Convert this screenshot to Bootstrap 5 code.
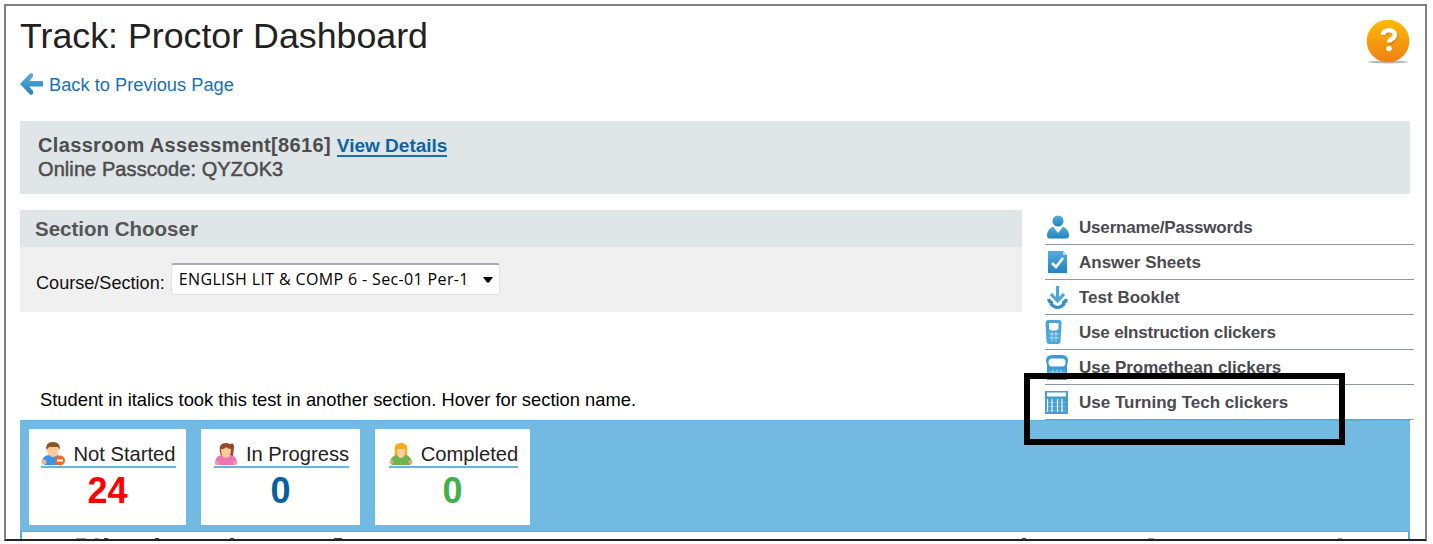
<!DOCTYPE html>
<html lang="en">
<head>
<meta charset="utf-8">
<meta name="viewport" content="width=device-width, initial-scale=1">
<title>Track: Proctor Dashboard</title>
<link href="https://cdn.jsdelivr.net/npm/bootstrap@5.3.0/dist/css/bootstrap.min.css" rel="stylesheet">
<style>
  body { font-family: "Liberation Sans", Arial, sans-serif; color: #1c1c1c; background: #fff; line-height: 1; overflow: hidden; }
  .frame { margin: 4px 0 0 4px; width: 1423px; height: 537px; border: 2px solid #808080; border-bottom-color: #222; padding: 0 13px 0 14px; }
  .frame, .frame * { white-space: nowrap; }
  .top-area { height: 115px; padding-top: 12px; }
  .page-title { font-size: 35.75px; font-weight: 400; line-height: 36px; margin: 0; color: #222; }
  .back-link { font-size: 18.3px; color: #1a70b5; text-decoration: none; margin-top: 19px; height: 24px; }
  .back-link svg { margin: -3px 5px 0 0; }
  .help { margin: 2px 2px 0 0; }
  .info-bar { height: 73px; width: 1390px; background: #e0e5e8; padding: 12px 18px; color: #4d4d4d; line-height: 24px; }
  .info-title { font-size: 20px; letter-spacing: .35px; }
  .info-title a { font-size: 19px; letter-spacing: 0; color: #0b64a5; text-decoration: none; border-bottom: 2px solid #1a6fae; display: inline-block; line-height: 19px; }
  .info-pass { font-size: 20px; letter-spacing: .08px; -webkit-text-stroke: .5px #4d4d4d; }
  .main-row { margin-top: 16px; height: 210px; }
  .left-col { width: 1002px; }
  .chooser { height: 102px; background: #f0f0f0; }
  .chooser-head { height: 37px; background: #e0e5e8; color: #555; font-size: 20.5px; line-height: 37px; padding-left: 15px; }
  .chooser-body { padding: 16px 0 0 16px; color: #111; font-size: 18.1px; }
  .chooser-body label { padding-top: 11px; }
  .picker { width: 329px; height: 32px; border: 1px solid #dde3ea; border-top: 2px solid #a9adb3; border-radius: 3px; background: #fff; color: #000; margin-left: 6px; padding: 0 5px 0 7px; font: 500 16px/29px "Open Sans", sans-serif; letter-spacing: .36px; }
  .note { margin: 78px 0 0 20px; font-size: 18.33px; line-height: 20px; color: #000; }
  .tools { width: 369px; margin-left: 23px; position: relative; z-index: 1; }
  .tool { height: 35px; border-bottom: 1.5px solid #8c99a3; color: #4a4a4f; font-size: 17px; font-weight: 700; }
  .tool svg { width: 24px; height: 26px; margin-right: 10px; flex: none; }
  .tight { letter-spacing: -.18px; }
  .marker { position: absolute; left: -21px; top: 163px; width: 321px; height: 72px; border: 6px solid #000; }
  .board { width: 1390px; background: #72bae1; border-top: 1px solid #5eb3df; height: 112px; border-bottom: 1px solid #55ade0; padding: 8px 9px; }
  .stat { background: #fff; height: 96px; padding-top: 12px; }
  .stat-name { font-size: 20.2px; color: #222; border-bottom: 2px solid #65b5e0; height: 27px; line-height: 26px; margin-left: 2px; }
  .stat-name svg { width: 24px; height: 24px; margin-right: 8px; }
  .stat-name span { padding-top: 1px; }
  .stat-num { font-size: 36px; font-weight: 700; line-height: 40px; margin-top: 3px; }
  .next-strip { height: 7px; width: 1390px; border: solid #55ade0; border-width: 0 2px; }
  .next-strip svg { display: block; }
</style>
<script src="https://cdn.jsdelivr.net/npm/bootstrap@5.3.0/dist/js/bootstrap.bundle.min.js"></script>
</head>
<body>
<svg width="0" height="0" class="d-block">
  <defs>
    <linearGradient id="blue" x1="0" y1="0" x2="0" y2="1"><stop offset="0" stop-color="#56aedf"/><stop offset="1" stop-color="#2382bd"/></linearGradient>
    <linearGradient id="orange" x1="0" y1="0" x2="0" y2="1"><stop offset="0" stop-color="#fdbb05"/><stop offset="1" stop-color="#ee7f13"/></linearGradient>
  </defs>
</svg>
<main class="frame">
  <header class="top-area d-flex justify-content-between">
    <div>
      <h1 class="page-title">Track: Proctor Dashboard</h1>
      <a href="#" class="back-link d-flex align-items-center">
        <svg width="24" height="24" viewBox="0 0 24 24"><path d="M0 12 10.500 1 13 2V4.500L9.300 9H22q1 0 1 1v3.500q0 1-1 1H9.300L13 19V22l-2.500 1Z" fill="url(#blue)"/></svg><span>Back to Previous Page</span>
      </a>
    </div>
    <svg class="help" width="44" height="46" viewBox="0 0 44 46"><ellipse cx="22" cy="42" rx="20" ry="1.500" fill="#bbb"/><circle cx="22" cy="21" r="21.300" fill="url(#orange)"/><path d="M17 15.500c0-6.500 12-6.500 12 0 0 4-5.500 4-5.500 8.500" fill="none" stroke="#b96a08" stroke-opacity=".5" stroke-width="4.500" transform="translate(1 .5)"/><path d="M17 15c0-6.500 12-6.500 12 0 0 4-5.700 3.500-5.700 7.500" fill="none" stroke="#fff" stroke-width="4.500"/><circle cx="23" cy="28.500" r="2.700" fill="#fff"/></svg>
  </header>

  <section class="info-bar">
    <div class="info-title fw-bold">Classroom Assessment[8616] <a href="#">View Details</a></div>
    <div class="info-pass">Online Passcode: QYZOK3</div>
  </section>

  <div class="main-row d-flex">
    <div class="left-col flex-shrink-0">
      <section class="chooser">
        <h2 class="chooser-head fw-bold m-0">Section Chooser</h2>
        <div class="chooser-body d-flex">
          <label>Course/Section:</label>
          <div class="picker d-flex align-items-center justify-content-between" role="combobox">
            <span>ENGLISH LIT &amp; COMP 6 - Sec-01 Per-1</span>
            <svg width="12" height="8" viewBox="0 0 12 8"><path d="M1 1h10L7 6.500H5Z"/></svg>
          </div>
        </div>
      </section>
      <p class="note">Student in italics took this test in another section. Hover for section name.</p>
    </div>
    <nav class="tools flex-shrink-0">
      <a class="tool d-flex align-items-center text-decoration-none"><svg viewBox="0 0 24 26"><circle cx="13" cy="7" r="5.500" fill="url(#blue)"/><path d="M8 12.500 13 19l5-6.500q6 3 6 9 0 3-3 3H5q-3 0-3-3 0-6 6-9Z" fill="url(#blue)"/></svg><span class="tight">Username/Passwords</span></a>
      <a class="tool d-flex align-items-center text-decoration-none"><svg viewBox="0 0 24 26"><path d="M3 2h15l4 4v18H3Z" fill="url(#blue)"/><path d="M18 2v4h4" fill="#b8daf0"/><path d="m7 14 4 4 7-9" fill="none" stroke="#fff" stroke-width="2.600"/></svg><span>Answer Sheets</span></a>
      <a class="tool d-flex align-items-center text-decoration-none"><svg viewBox="0 0 24 26" fill="none" stroke="#358fc6"><path d="M12.500 2v14M6 10l6.500 7L19 10" stroke="#4aa5d9" stroke-width="3.200"/><path d="M3.500 15q1 4 4.500 3.500M21.500 15q-1 4-4.500 3.500M5.500 19.500q7 8 14 0" stroke-width="3.200"/></svg><span>Test Booklet</span></a>
      <a class="tool d-flex align-items-center text-decoration-none"><svg viewBox="0 0 24 26"><path d="M3 1h11q3 0 2.500 4l-1 17q0 3-3 3h-8q-3 0-3-3l-1-17Q.5 1 3 1Z" fill="#4ba5d8"/><path d="M4 4h9.500v6l-2 1.500H6L4 10Z" fill="#fff"/><path d="M4 15h10M4 19h10M7 13v10M11 13v10" stroke="#b6daef"/></svg><span class="tight">Use eInstruction clickers</span></a>
      <a class="tool d-flex align-items-center text-decoration-none"><svg viewBox="0 0 24 26"><path d="M7 1h10q6 0 6 6l-1 4v15H2V11L1 7q0-6 6-6Z" fill="#3d9bd2"/><path d="M7 4.500h10q3.500 0 3.500 4 0 4-3.500 4H7q-3.500 0-3.500-4 0-4 3.500-4Z" fill="#fff"/><path d="M4 18h16M8 15v10M12 15v10M16 15v10" stroke="#a6d1ea"/></svg><span>Use Promethean clickers</span></a>
      <a class="tool d-flex align-items-center text-decoration-none"><svg viewBox="0 0 24 26"><path d="M0 2h23v23H0Z" fill="#469fcc"/><path d="M2 3.500h19v4H2Z" fill="#fff"/><path d="M2 13.500h19M2 17.500h19M2 21.500h19" stroke="#7dbbdc" stroke-width=".8"/><path d="M2.500 10v13M7 10v13M12.500 10v13M17 10v13" stroke="#fff" stroke-opacity=".85" stroke-width="1.300"/></svg><span>Use Turning Tech clickers</span></a>
      <div class="marker"></div>
    </nav>
  </div>

  <section class="board d-flex">
    <div class="stat d-flex flex-column align-items-center" style="width:157px">
      <div class="stat-name d-flex align-items-center"><svg viewBox="0 0 24 24"><path d="M1 21q0-7 6-8h9q6 2 6 8l-3 2H4Z" fill="#3d91e6"/><circle cx="3" cy="20" r="2.500" fill="#f4b184"/><ellipse cx="12" cy="8" rx="6" ry="7" fill="#ffc99b"/><path d="M5.500 8Q4 0 12 0t6.500 8L17 5H8Z" fill="#8e5425"/><circle cx="19" cy="18.500" r="5" fill="#f26a1b"/><path d="M16 18.500h6" stroke="#fff" stroke-width="2"/></svg><span>Not Started</span></div>
      <div class="stat-num" style="color:#f00">24</div>
    </div>
    <div class="stat d-flex flex-column align-items-center" style="width:159px;margin-left:15px">
      <div class="stat-name d-flex align-items-center"><svg viewBox="0 0 24 24"><path d="M6 10Q4 1 12 1q2 0 4 1 4-2 4 3l-1 9H7Z" fill="#93472c"/><path d="M1 21q0-6 6-8h10q6 2 6 8l-2 2H3Z" fill="#ee74b6"/><circle cx="3" cy="21" r="2" fill="#efa38c"/><circle cx="21" cy="21" r="2" fill="#efa38c"/><path d="M7 7q4 0 5-2 2 2 5 2 0 9-5 9T7 7Z" fill="#ffc99b"/></svg><span>In Progress</span></div>
      <div class="stat-num" style="color:#04639f">0</div>
    </div>
    <div class="stat d-flex flex-column align-items-center" style="width:155px;margin-left:15px">
      <div class="stat-name d-flex align-items-center"><svg viewBox="0 0 24 24"><path d="M6 10Q4 1 12 1t6 9l1 6H5Z" fill="#f6ab17"/><path d="M1 21q0-6 6-8l5 3 5-3q6 2 6 8l-2 2H3Z" fill="#72b34b"/><circle cx="2.500" cy="20" r="2" fill="#efa878"/><circle cx="21.500" cy="20" r="2" fill="#efa878"/><path d="M8 7h8q0 9-4 9T8 7Z" fill="#ffd0a4"/></svg><span>Completed</span></div>
      <div class="stat-num" style="color:#42b049">0</div>
    </div>
  </section>
  <div class="next-strip"><svg width="1386" height="7"><path d="M54 7h10M73 7h4M82 6.500h4M133 6.500h4M208 6.500h4M312 6.500h8M1000 6.500h4M1126 7h6M1316 7h4" stroke="#444" stroke-width="1"/></svg></div>
</main>
</body>
</html>
